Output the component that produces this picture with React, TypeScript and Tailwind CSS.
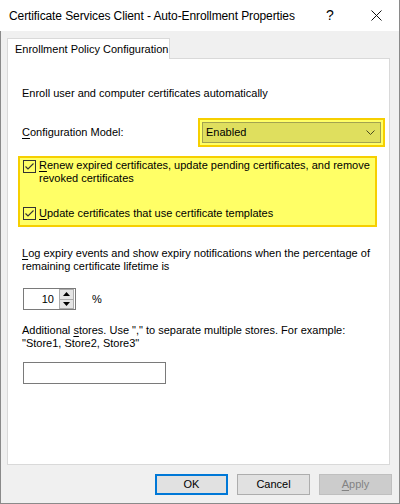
import React from 'react';

// Diálogo de propiedades estilo Windows 10 (Auto-Enrollment)

function CheckBox() {
  return (
    <span className="w-[13px] h-[13px] border border-[#333333] flex-none flex items-center justify-center">
      <svg width="11" height="11" viewBox="0 0 11 11">
        <path d="M1.5 5.5 L4 8 L9.5 2.5" fill="none" stroke="#333333" strokeWidth="1.1" />
      </svg>
    </span>
  );
}

function Mn({ children }: { children: React.ReactNode }) {
  return <span className="underline underline-offset-2">{children}</span>;
}

export default function App() {
  return (
    <div
      className="w-[400px] h-[504px] flex flex-col text-[11px] text-black border-r border-[#8a8a8a]"
      style={{ fontFamily: '"Liberation Sans", Arial, sans-serif' }}
    >
      {/* Title bar */}
      <div className="h-[31px] bg-white flex items-center flex-none">
        <div className="pl-[9px] flex-1 text-[12px] tracking-[-0.1px]">
          Certificate Services Client - Auto-Enrollment Properties
        </div>
        <div className="w-[46px] h-full flex items-center justify-center text-[14px]">?</div>
        <div className="w-[46px] h-full flex items-center justify-center">
          <svg width="11" height="11" viewBox="0 0 11 11">
            <path d="M0.5 0.5 L10.5 10.5 M10.5 0.5 L0.5 10.5" stroke="#111" strokeWidth="1" />
          </svg>
        </div>
      </div>

      {/* Body */}
      <div className="flex-1 bg-[#f0f0f0] border-l border-b border-[#8a8a8a] pl-[6px] pt-[7px] flex flex-col">
        {/* Tab */}
        <div className="flex">
          <div className="h-[21px] w-[163px] bg-white border border-b-0 border-[#d9d9d9] pl-[7px] flex items-center relative z-10 -mb-px">
            Enrollment Policy Configuration
          </div>
        </div>

        {/* Panel */}
        <div className="w-[383px] h-[407px] bg-white border border-[#d9d9d9] flex flex-col pl-[14px]">
          <div className="mt-[28px] leading-[13px]">
            Enroll user and computer certificates automatically
          </div>

          <div className="mt-[18px] h-[29px] flex items-center">
            <div className="flex-1">
              <Mn>C</Mn>onfiguration Model:
            </div>
            <div className="w-[187px] h-[29px] mr-[4px] bg-[#ffff66] border-2 border-[#f6cf00] p-[2px]">
              <div className="h-full bg-[#dfdf5e] border border-[#a3a350] flex items-center pl-[3px] pr-[5px]">
                <span className="flex-1">Enabled</span>
                <svg width="9" height="5" viewBox="0 0 9 5">
                  <path d="M0.5 0.5 L4.5 4.5 L8.5 0.5" fill="none" stroke="#4a4a20" strokeWidth="1" />
                </svg>
              </div>
            </div>
          </div>

          <div className="mt-[9px] -ml-[4px] w-[359px] h-[71px] bg-[#ffff66] border-2 border-[#f6cf00] pl-[3px] pt-[1px] leading-[13px]">
            <div className="flex gap-[3px] items-start">
              <span className="mt-[1px]">
                <CheckBox />
              </span>
              <div>
                <Mn>R</Mn>enew expired certificates, update pending certificates, and remove
                <br />
                revoked certificates
              </div>
            </div>
            <div className="flex gap-[3px] items-start mt-[22px]">
              <span className="mt-[0px]">
                <CheckBox />
              </span>
              <div>
                <Mn>U</Mn>pdate certificates that use certificate templates
              </div>
            </div>
          </div>

          <div className="mt-[20px] leading-[13px]">
            <Mn>L</Mn>og expiry events and show expiry notifications when the percentage of
            <br />
            remaining certificate lifetime is
          </div>

          <div className="mt-[15px] flex items-center">
            <div className="ml-[1px] w-[53px] h-[22px] border border-[#7a7a7a] flex items-center">
              <span className="flex-1 text-right pr-[5px]">10</span>
              <div className="w-[16px] h-full flex flex-col pr-[1px]">
                <div className="flex-1 bg-[#e5e5e5] border border-[#acacac] flex items-center justify-center">
                  <svg width="7" height="4" viewBox="0 0 7 4">
                    <path d="M0 4 L3.5 0 L7 4 Z" fill="#000" />
                  </svg>
                </div>
                <div className="flex-1 bg-[#e5e5e5] border border-t-0 border-[#acacac] flex items-center justify-center">
                  <svg width="7" height="4" viewBox="0 0 7 4">
                    <path d="M0 0 L7 0 L3.5 4 Z" fill="#000" />
                  </svg>
                </div>
              </div>
            </div>
            <span className="ml-[16px]">%</span>
          </div>

          <div className="mt-[14px] leading-[13px]">
            Additional <Mn>s</Mn>tores. Use "," to separate multiple stores. For example:
            <br />
            "Store1, Store2, Store3"
          </div>

          <div className="mt-[12px] ml-[1px] w-[143px] h-[22px] border border-[#7a7a7a] bg-white" />
        </div>

        {/* Buttons */}
        <div className="mt-[9px] flex justify-end gap-[9px] pr-[7px]">
          <button className="w-[73px] h-[21px] bg-[#e1e1e1] border-2 border-[#0078d7] flex items-center justify-center">
            OK
          </button>
          <button className="w-[73px] h-[21px] bg-[#e1e1e1] border border-[#adadad] flex items-center justify-center">
            Cancel
          </button>
          <button className="w-[73px] h-[21px] bg-[#cccccc] border border-[#bfbfbf] text-[#838383] flex items-center justify-center">
            <Mn>A</Mn>pply
          </button>
        </div>
      </div>
    </div>
  );
}
